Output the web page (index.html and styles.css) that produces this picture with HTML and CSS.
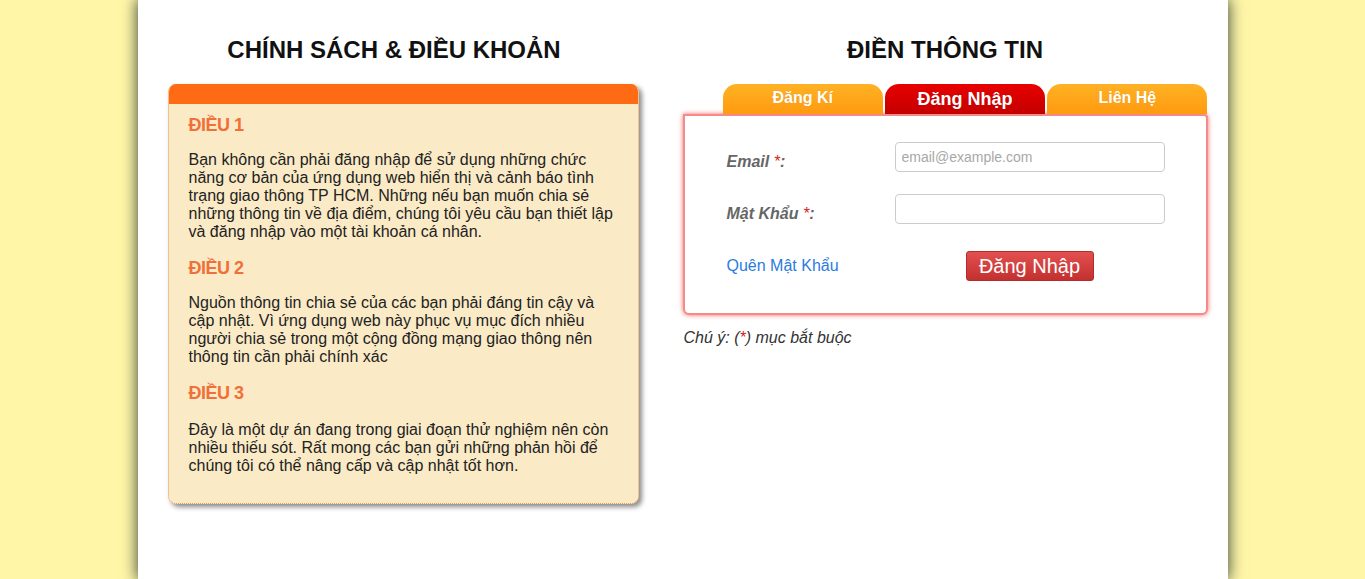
FILE: index.html
```html
<!DOCTYPE html>
<html lang="vi">
<head>
<meta charset="utf-8">
<title>Đăng Nhập</title>
<link rel="stylesheet" href="styles.css">
</head>
<body>
<div class="page">
  <div class="columns">
    <section class="policy">
      <h2 class="title title-left">CHÍNH SÁCH &amp; ĐIỀU KHOẢN</h2>
      <div class="policy-box">
        <div class="policy-bar"></div>
        <div class="policy-body">
          <h4 class="term">ĐIỀU 1</h4>
          <p>Bạn không cần phải đăng nhập để sử dụng những chức năng cơ bản của ứng dụng web hiển thị và cảnh báo tình trạng giao thông TP HCM. Những nếu bạn muốn chia sẻ những thông tin về địa điểm, chúng tôi yêu cầu bạn thiết lập và đăng nhập vào một tài khoản cá nhân.</p>
          <h4 class="term">ĐIỀU 2</h4>
          <p>Nguồn thông tin chia sẻ của các bạn phải đáng tin cậy và cập nhật. Vì ứng dụng web này phục vụ mục đích nhiều người chia sẻ trong một cộng đồng mạng giao thông nên thông tin cần phải chính xác</p>
          <h4 class="term term-last">ĐIỀU 3</h4>
          <p>Đây là một dự án đang trong giai đoạn thử nghiệm nên còn nhiều thiếu sót. Rất mong các bạn gửi những phản hồi để chúng tôi có thể nâng cấp và cập nhật tốt hơn.</p>
        </div>
      </div>
    </section>
    <section class="info">
      <h2 class="title">ĐIỀN THÔNG TIN</h2>
      <div class="tabs">
        <div class="tab">Đăng Kí</div>
        <div class="tab tab-active">Đăng Nhập</div>
        <div class="tab">Liên Hệ</div>
      </div>
      <form class="login">
        <label class="label">Email <span class="req">*</span>:</label>
        <input class="field" type="text" placeholder="email@example.com">
        <label class="label">Mật Khẩu <span class="req">*</span>:</label>
        <input class="field" type="password">
        <a class="forgot" href="#">Quên Mật Khẩu</a>
        <div class="btn-cell"><button class="btn" type="button">Đăng Nhập</button></div>
      </form>
      <p class="note">Chú ý: (<span class="req">*</span>) mục bắt buộc</p>
    </section>
  </div>
</div>
</body>
</html>
```

FILE: styles.css
```css
html, body {
  margin: 0;
  padding: 0;
}
body {
  background: #fff6a8;
  font-family: "Liberation Sans", Arial, sans-serif;
  color: #222;
  overflow: hidden;
}
.page {
  width: 1090px;
  margin: 0 auto;
  min-height: 100vh;
  background: #fff;
  box-shadow: 0 0 14px 1px #3e4d3e;
}
.columns {
  display: flex;
  gap: 44px;
  padding: 36px 20px 0 30px;
}
.policy {
  width: 471px;
  flex: none;
}
.info {
  width: 525px;
  flex: none;
}
.title {
  margin: 0 0 21px;
  font-size: 24px;
  line-height: 27px;
  font-weight: bold;
  color: #111;
  text-align: center;
}
.title-left {
  padding-right: 18px;
}
.policy-box {
  background: #faeac6;
  border: 1px dotted #e79a5a;
  border-top: none;
  border-radius: 8px;
  box-shadow: 3px 3px 5px #8a8a8a;
  overflow: hidden;
}
.policy-bar {
  height: 20px;
  background: #ff6a14;
}
.policy-body {
  padding: 0 20px 28px;
}
.term {
  margin: 16px 0 15px;
  font-size: 18px;
  line-height: 22px;
  font-weight: bold;
  color: #f0703a;
  letter-spacing: -0.5px;
}
.term:first-child {
  margin-top: 10px;
}
.term.term-last {
  margin-bottom: 17px;
}
.policy-body p {
  margin: 0;
  font-size: 16px;
  line-height: 18px;
  color: #222;
}
.tabs {
  display: flex;
  gap: 2px;
  padding-left: 40px;
  height: 30px;
}
.tab {
  width: 161px;
  height: 30px;
  border-radius: 14px 14px 0 0;
  background: linear-gradient(#ffb224, #ff9a10);
  color: #fff;
  font-weight: bold;
  font-size: 16px;
  line-height: 27px;
  text-align: center;
  text-shadow: 0 0 1px rgba(0,0,0,0.15);
}
.tab-active {
  background: linear-gradient(#e80000, #c40000);
  font-size: 18px;
  line-height: 30px;
}
.login {
  display: grid;
  grid-template-columns: 168px 270px;
  grid-template-rows: 30px 30px 35px;
  row-gap: 22px;
  align-items: center;
  margin: 0;
  padding: 26px 0 32px 42px;
  border: 2px solid #f48a8a;
  border-radius: 0 4px 6px 6px;
  box-shadow: 0 0 5px #f26a6a;
  background: #fff;
}
.login .forgot,
.login .btn-cell {
  align-self: end;
}
.label {
  font-size: 16px;
  font-weight: bold;
  font-style: italic;
  color: #666;
  padding-top: 10px;
}
.req {
  color: #d42020;
  font-weight: normal;
}
.field {
  box-sizing: border-box;
  width: 270px;
  height: 30px;
  border: 1px solid #ccc;
  border-radius: 4px;
  padding: 0 6px;
  font-family: "Liberation Sans", Arial, sans-serif;
  font-size: 14px;
  color: #333;
}
.field::placeholder {
  color: #a8a8a8;
}
.forgot {
  font-size: 16px;
  line-height: 30px;
  color: #2a7be0;
  text-decoration: none;
}
.btn-cell {
  display: flex;
  justify-content: center;
}
.btn {
  width: 128px;
  height: 30px;
  border: 1px solid #b52a2a;
  border-radius: 3px;
  background: linear-gradient(#e25050, #c23030);
  color: #fff;
  font-family: "Liberation Sans", Arial, sans-serif;
  font-size: 20px;
  padding: 0;
  line-height: 28px;
}
.note {
  margin: 14px 0 0 1px;
  font-size: 16px;
  line-height: 18px;
  font-style: italic;
  color: #333;
}
```
